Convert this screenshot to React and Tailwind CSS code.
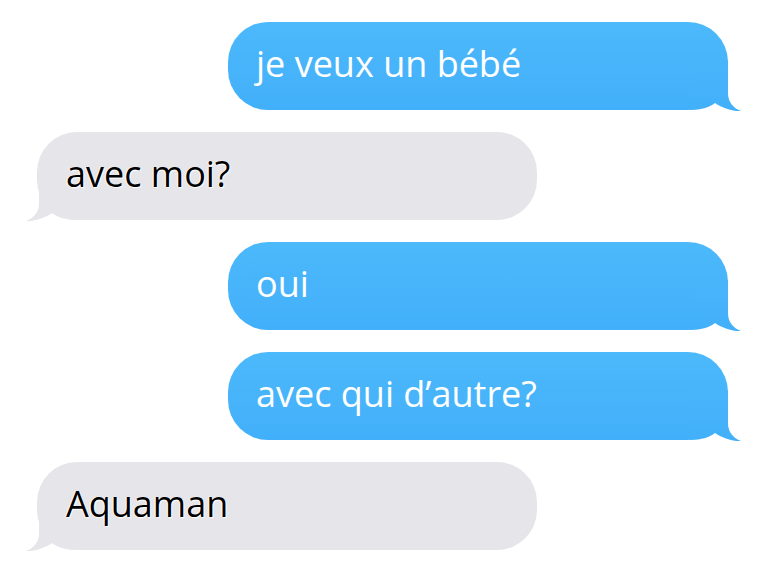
const messages = [
  { from: 'me', text: 'je veux un bébé' },
  { from: 'them', text: 'avec moi?' },
  { from: 'me', text: 'oui' },
  { from: 'me', text: 'avec qui d’autre?' },
  { from: 'them', text: 'Aquaman' },
]

function Tail({ mine }) {
  return (
    <svg
      width="52"
      height="52"
      viewBox="0 0 52 52"
      className={mine ? 'absolute right-[-14px] bottom-[-2px]' : 'absolute left-[-12px] bottom-[-2px] -scale-x-100'}
    >
      <defs>
        <linearGradient id="blueTail" gradientUnits="userSpaceOnUse" x1="0" y1="-36" x2="0" y2="52">
          <stop offset="0" stopColor="#4cb9fb" />
          <stop offset="1" stopColor="#42affa" />
        </linearGradient>
      </defs>
      <path
        d="M38 0 V33 C38 42 43 48 51 51 C43 51.5 32 48 25 43 C20 47 12 50 0 50 L0 0 Z"
        fill={mine ? 'url(#blueTail)' : '#e5e5ea'}
      />
    </svg>
  )
}

function Bubble({ from, text }) {
  const mine = from === 'me'
  return (
    <div className={mine ? 'flex justify-end pr-[38px]' : 'flex justify-start pl-[37px]'}>
      <div
        className={
          mine
            ? 'relative w-[500px] h-[88px] rounded-[40px] bg-linear-to-b/srgb from-[#4cb9fb] to-[#42affa] flex items-center pl-7'
            : 'relative w-[500px] h-[88px] rounded-[40px] bg-[#e5e5ea] flex items-center pl-[29px]'
        }
      >
        <Tail mine={mine} />
        <span
          className={
            mine
              ? 'relative text-white text-[36px] font-["Open_Sans",sans-serif] leading-none -mt-1'
              : 'relative text-black text-[36px] font-["Open_Sans",sans-serif] leading-none -mt-1 [text-shadow:1px_1px_1px_#fff,-1px_0_1px_#fff]'
          }
        >
          {text}
        </span>
      </div>
    </div>
  )
}

export default function App() {
  return (
    <div className="w-[766px] h-[577px] bg-white pt-[22px] flex flex-col gap-[22px] overflow-hidden">
      {messages.map((m, i) => (
        <Bubble key={i} {...m} />
      ))}
    </div>
  )
}
